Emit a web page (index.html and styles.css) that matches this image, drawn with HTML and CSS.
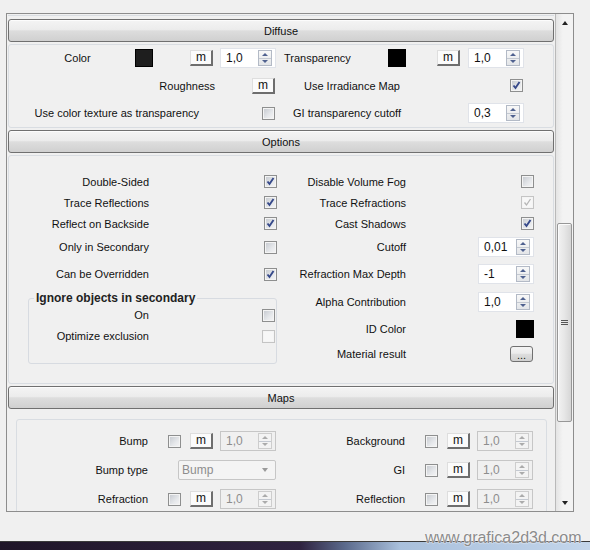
FILE: index.html
```
<!DOCTYPE html>
<html lang="en">
<head>
    <meta charset="UTF-8">
    <title>Material Editor</title>
    <link rel="stylesheet" href="styles.css">
</head>
<body>
    <div class="frame">
        <div class="pane">
            <div class="prev-end"></div>

            <div class="rollout-head">Diffuse</div>
            <div class="rollout-body diffuse">
                <div class="drow">
                    <span class="lbl lbl-color">Color</span>
                    <span class="swatch swatch-grey"></span>
                    <span class="mbtn mbtn-color">m</span>
                    <div class="spin spin-color"><span class="val">1,0</span><span class="arrows"><i class="up"></i><i class="dn"></i></span></div>
                    <span class="lbl lbl-transp">Transparency</span>
                    <span class="swatch"></span>
                    <span class="mbtn mbtn-transp">m</span>
                    <div class="spin spin-transp"><span class="val">1,0</span><span class="arrows"><i class="up"></i><i class="dn"></i></span></div>
                </div>
                <div class="drow drow-mid">
                    <span class="lbl lbl-rough">Roughness</span>
                    <span class="mbtn mbtn-rough">m</span>
                    <span class="lbl lbl-irr">Use Irradiance Map</span>
                    <span class="chk on chk-irr"><svg viewBox="0 0 11 11"><path d="M2.5 5.5l2 2.5 4-6"/></svg></span>
                </div>
                <div class="drow">
                    <span class="lbl lbl-usecol">Use color texture as transparency</span>
                    <span class="chk chk-usecol"></span>
                    <span class="lbl lbl-gi">GI transparency cutoff</span>
                    <div class="spin spin-gi"><span class="val">0,3</span><span class="arrows"><i class="up"></i><i class="dn"></i></span></div>
                </div>
            </div>

            <div class="rollout-head">Options</div>
            <div class="rollout-body options">
                <div class="ocol ocol-left">
                    <div class="orow"><span class="olbl">Double-Sided</span><span class="octl"><span class="chk on"><svg viewBox="0 0 11 11"><path d="M2.5 5.5l2 2.5 4-6"/></svg></span></span></div>
                    <div class="orow"><span class="olbl">Trace Reflections</span><span class="octl"><span class="chk on"><svg viewBox="0 0 11 11"><path d="M2.5 5.5l2 2.5 4-6"/></svg></span></span></div>
                    <div class="orow"><span class="olbl">Reflect on Backside</span><span class="octl"><span class="chk on"><svg viewBox="0 0 11 11"><path d="M2.5 5.5l2 2.5 4-6"/></svg></span></span></div>
                    <div class="orow"><span class="olbl">Only in Secondary</span><span class="octl"><span class="chk"></span></span></div>
                    <div class="orow"><span class="olbl">Can be Overridden</span><span class="octl"><span class="chk on"><svg viewBox="0 0 11 11"><path d="M2.5 5.5l2 2.5 4-6"/></svg></span></span></div>
                    <fieldset class="grp">
                        <legend>Ignore objects in secondary</legend>
                        <div class="grow"><span class="glbl">On</span><span class="gctl"><span class="chk"></span></span></div>
                        <div class="grow"><span class="glbl">Optimize exclusion</span><span class="gctl"><span class="chk off"></span></span></div>
                    </fieldset>
                </div>
                <div class="ocol ocol-right">
                    <div class="orow"><span class="olbl">Disable Volume Fog</span><span class="octl"><span class="chk"></span></span></div>
                    <div class="orow"><span class="olbl">Trace Refractions</span><span class="octl"><span class="chk off on"><svg viewBox="0 0 11 11"><path d="M2.5 5.5l2 2.5 4-6"/></svg></span></span></div>
                    <div class="orow"><span class="olbl">Cast Shadows</span><span class="octl"><span class="chk on"><svg viewBox="0 0 11 11"><path d="M2.5 5.5l2 2.5 4-6"/></svg></span></span></div>
                    <div class="orow"><span class="olbl">Cutoff</span><span class="octl"><div class="spin"><span class="val">0,01</span><span class="arrows"><i class="up"></i><i class="dn"></i></span></div></span></div>
                    <div class="orow"><span class="olbl">Refraction Max Depth</span><span class="octl"><div class="spin"><span class="val">-1</span><span class="arrows"><i class="up"></i><i class="dn"></i></span></div></span></div>
                    <div class="orow"><span class="olbl">Alpha Contribution</span><span class="octl"><div class="spin spin-alpha"><span class="val">1,0</span><span class="arrows"><i class="up"></i><i class="dn"></i></span></div></span></div>
                    <div class="orow"><span class="olbl">ID Color</span><span class="octl"><span class="swatch"></span></span></div>
                    <div class="orow"><span class="olbl">Material result</span><span class="octl"><span class="dots">...</span></span></div>
                </div>
            </div>

            <div class="rollout-head">Maps</div>
            <div class="maps">
                <div class="mbox">
                    <div class="mrow">
                        <div class="mhalf">
                            <span class="mlbl">Bump</span>
                            <span class="chk"></span>
                            <span class="mbtn">m</span>
                            <div class="spin dis"><span class="val">1,0</span><span class="arrows"><i class="up"></i><i class="dn"></i></span></div>
                        </div>
                        <div class="mhalf">
                            <span class="mlbl">Background</span>
                            <span class="chk"></span>
                            <span class="mbtn">m</span>
                            <div class="spin dis"><span class="val">1,0</span><span class="arrows"><i class="up"></i><i class="dn"></i></span></div>
                        </div>
                    </div>
                    <div class="mrow">
                        <div class="mhalf">
                            <span class="mlbl">Bump type</span>
                            <span class="combo">Bump</span>
                        </div>
                        <div class="mhalf">
                            <span class="mlbl">GI</span>
                            <span class="chk"></span>
                            <span class="mbtn">m</span>
                            <div class="spin dis"><span class="val">1,0</span><span class="arrows"><i class="up"></i><i class="dn"></i></span></div>
                        </div>
                    </div>
                    <div class="mrow">
                        <div class="mhalf">
                            <span class="mlbl">Refraction</span>
                            <span class="chk"></span>
                            <span class="mbtn">m</span>
                            <div class="spin dis"><span class="val">1,0</span><span class="arrows"><i class="up"></i><i class="dn"></i></span></div>
                        </div>
                        <div class="mhalf">
                            <span class="mlbl">Reflection</span>
                            <span class="chk"></span>
                            <span class="mbtn">m</span>
                            <div class="spin dis"><span class="val">1,0</span><span class="arrows"><i class="up"></i><i class="dn"></i></span></div>
                        </div>
                    </div>
                </div>
            </div>
        </div>
        <div class="vscroll">
            <div class="sb-btn sb-up"></div>
            <div class="sb-track">
                <div class="sb-thumb"><span class="grip"></span></div>
            </div>
            <div class="sb-btn sb-down"></div>
        </div>
    </div>
    <div class="taskbar"></div>
    <div class="watermark">www.grafica2d3d.com</div>
</body>
</html>
```

FILE: styles.css
```
*{
    box-sizing: border-box;
}
body{
    margin: 0;
    height: 550px;
    overflow: hidden;
    position: relative;
    background-color: #f0f0f0;
    font-family: "Liberation Sans", Arial, sans-serif;
    font-size: 11px;
    color: #111;
}

/* window frame */
.frame{
    margin: 13px 0 0 6px;
    width: 568px;
    height: 499px;
    border: 1px solid #8d8d8d;
    display: flex;
}
.pane{
    width: 548px;
    overflow: hidden;
}
.prev-end{
    height: 2px;
    margin: 0 1px;
    border-bottom: 1px solid #d9dde2;
}

/* rollouts */
.rollout-head{
    margin: 3px 1px 0;
    height: 23px;
    border: 1px solid #707070;
    border-radius: 3px;
    background: linear-gradient(#f4f4f4, #ececec 45%, #dddddd 52%, #d0d0d0);
    box-shadow: inset 0 1px 0 #fcfcfc;
    text-align: center;
    line-height: 23px;
}
.rollout-body + .rollout-head{
    margin-top: 2px;
}
.rollout-body{
    margin: 2px 1px 0;
    border: 1px solid #d9dde2;
    border-radius: 3px;
}

/* diffuse */
.diffuse{
    height: 84px;
    padding-top: 3px;
    display: flex;
    flex-direction: column;
    gap: 7px;
}
.drow{
    display: flex;
    align-items: center;
    height: 20px;
}
.drow-mid{
    height: 21px;
}
.lbl{
    white-space: nowrap;
}
.lbl-color{ margin-left: 11px; width: 115px; text-align: center; }
.mbtn-color{ margin-left: 37px; }
.spin-color{ margin-left: 7px; }
.lbl-transp{ margin-left: 8px; width: 104px; }
.mbtn-transp{ margin-left: 31px; }
.spin-transp{ margin-left: 8px; }
.lbl-rough{ width: 206px; text-align: right; }
.mbtn-rough{ margin-left: 37px; }
.lbl-irr{ width: 125px; text-align: right; }
.chk-irr{ margin-left: 110px; }
.lbl-usecol{ width: 190px; text-align: right; }
.chk-usecol{ margin-left: 63px; }
.lbl-gi{ width: 126px; text-align: right; }
.spin-gi{ margin-left: 67px; }

/* controls */
.swatch{
    width: 18px;
    height: 18px;
    border: 1px solid #000;
    background-color: #000;
    flex-shrink: 0;
}
.swatch-grey{
    background-color: #1e1e1e;
}
.mbtn{
    width: 23px;
    height: 16px;
    flex-shrink: 0;
    background-color: #fbfbfb;
    border-top: 1px solid #dedede;
    border-left: 1px solid #dedede;
    border-right: 2px solid #6e6e6e;
    border-bottom: 2px solid #6e6e6e;
    text-align: center;
    line-height: 12px;
    font-size: 12px;
}
.spin{
    width: 56px;
    height: 20px;
    flex-shrink: 0;
    display: flex;
    align-items: center;
    background-color: #fff;
    border: 1px solid #e0e3e9;
    font-size: 12px;
}
.spin .val{
    flex: 1;
    padding-left: 5px;
}
.arrows{
    width: 14px;
    height: 16px;
    margin-right: 3px;
    display: flex;
    flex-direction: column;
    border: 1px solid #b3bac6;
    background: linear-gradient(#f8f8f8, #e3e5e8);
}
.arrows i{
    flex: 1;
    display: flex;
    align-items: center;
    justify-content: center;
}
.arrows i + i{
    border-top: 1px solid #c4c9d1;
}
.arrows .up::before{
    content: "";
    border: 3px solid transparent;
    border-top: 0;
    border-bottom: 3px solid #4f618f;
}
.arrows .dn::before{
    content: "";
    border: 3px solid transparent;
    border-bottom: 0;
    border-top: 3px solid #4f618f;
}
.spin.dis{
    background-color: #f0f0f0;
    border-color: #c6c6c6;
    color: #8d8d8d;
}
.spin.dis .arrows{
    border-color: #cdcdcd;
    background: #f3f3f3;
}
.spin.dis .up::before{ border-bottom-color: #ababab; }
.spin.dis .dn::before{ border-top-color: #ababab; }

.chk{
    width: 13px;
    height: 13px;
    flex-shrink: 0;
    display: inline-flex;
    align-items: center;
    justify-content: center;
    border: 1px solid #8e8f8f;
    background: linear-gradient(135deg, #c4c8ce, #e6e8eb 60%, #f6f6f6);
    box-shadow: inset 0 0 0 1px #f4f4f4;
}
.chk svg{
    width: 11px;
    height: 11px;
    fill: none;
    stroke: #36498a;
    stroke-width: 1.9;
}
.chk.off{
    border-color: #c4c4c4;
    background: #f7f7f7;
}
.chk.off svg{
    stroke: #b6b6b6;
    stroke-width: 1.3;
}
.dots{
    width: 23px;
    height: 16px;
    margin-right: 1px;
    border: 1px solid #707070;
    border-radius: 3px;
    background: linear-gradient(#f4f4f4, #ebebeb 45%, #dddddd 52%, #d0d0d0);
    text-align: center;
    line-height: 17px;
}
.combo{
    margin-left: 30px;
    width: 98px;
    height: 20px;
    display: flex;
    align-items: center;
    justify-content: space-between;
    padding: 0 7px 0 3px;
    border: 1px solid #c6c6c6;
    border-radius: 2px;
    background-color: #f4f4f4;
    color: #8d8d8d;
    font-size: 12px;
}
.combo::after{
    content: "";
    border: 3.5px solid transparent;
    border-bottom: 0;
    border-top: 4px solid #9a9a9a;
}

/* options */
.options{
    height: 229px;
    padding: 15px 0 0 11px;
    display: flex;
}
.ocol{
    width: 257px;
    display: grid;
    align-content: start;
}
.ocol-left{
    grid-template-rows: 21px 21px 21px 26px 28px auto;
}
.ocol-right{
    grid-template-rows: 21px 21px 21px 26px 28px 28px 26px 24px;
}
.orow{
    display: flex;
    align-items: center;
}
.olbl{
    width: 129px;
    text-align: right;
    white-space: nowrap;
}
.octl{
    flex: 1;
    display: flex;
    justify-content: flex-end;
}
.grp{
    margin: 4px 0 0 8px;
    width: 249px;
    height: 72px;
    padding: 0 1px 0 0;
    border: 1px solid #d7dbe1;
    border-radius: 3px;
}
.grp legend{
    margin-left: 5px;
    padding: 0 2px;
    font-size: 12px;
    font-weight: bold;
    line-height: 13px;
    color: #222;
}
.grow{
    height: 20px;
    display: flex;
    align-items: center;
}
.grow + .grow{
    height: 22px;
}
.glbl{
    width: 120px;
    text-align: right;
}
.gctl{
    flex: 1;
    display: flex;
    justify-content: flex-end;
}

/* maps */
.maps{
    padding: 10px 8px 0 9px;
}
.mbox{
    height: 110px;
    padding: 11px 0 0 2px;
    border: 1px solid #d9dde2;
    border-radius: 3px;
    display: flex;
    flex-direction: column;
    gap: 9px;
}
.mrow{
    display: flex;
    height: 20px;
}
.mhalf{
    width: 257px;
    display: flex;
    align-items: center;
}
.mlbl{
    width: 129px;
    text-align: right;
}
.mhalf .chk{ margin-left: 20px; }
.mhalf .mbtn{ margin-left: 9px; }
.mhalf .spin{ margin-left: 7px; }

/* scrollbar */
.vscroll{
    width: 18px;
    border-left: 1px solid #b9b9b9;
    display: flex;
    flex-direction: column;
    background: linear-gradient(to right, #e4e4e4, #f3f3f3 40%, #f3f3f3);
}
.sb-btn{
    height: 17px;
    display: flex;
    align-items: center;
    justify-content: center;
}
.sb-up::before{
    content: "";
    border: 3.5px solid transparent;
    border-top: 0;
    border-bottom: 4px solid #222;
}
.sb-down::before{
    content: "";
    border: 3.5px solid transparent;
    border-bottom: 0;
    border-top: 4px solid #222;
}
.sb-track{
    flex: 1;
}
.sb-thumb{
    margin: 192px 1px 0;
    height: 199px;
    border: 1px solid #979797;
    border-radius: 2px;
    background: linear-gradient(to right, #f2f2f2, #e6e6e6 50%, #d6d6d6);
    box-shadow: inset 1px 1px 0 #fbfbfb;
    display: flex;
    align-items: center;
    justify-content: center;
}
.grip{
    width: 7px;
    height: 5px;
    border-top: 1px solid #555;
    border-bottom: 1px solid #555;
    background: linear-gradient(transparent 1px, #555 1px, #555 2px, transparent 2px);
}

/* desktop bits */
.taskbar{
    margin-top: 29px;
    height: 9px;
    border-top: 1px solid #3a3a3a;
    background: linear-gradient(to right, #1f1528, #2f2340 300px, #5b6a8c 345px, #a9c0dc 400px, #c3d5ea);
}
.watermark{
    position: absolute;
    left: 425px;
    top: 529px;
    font-size: 16px;
    color: #8b8b8b;
    text-shadow: 0 0 2px #fff, 0 0 1px #fff;
}
```
